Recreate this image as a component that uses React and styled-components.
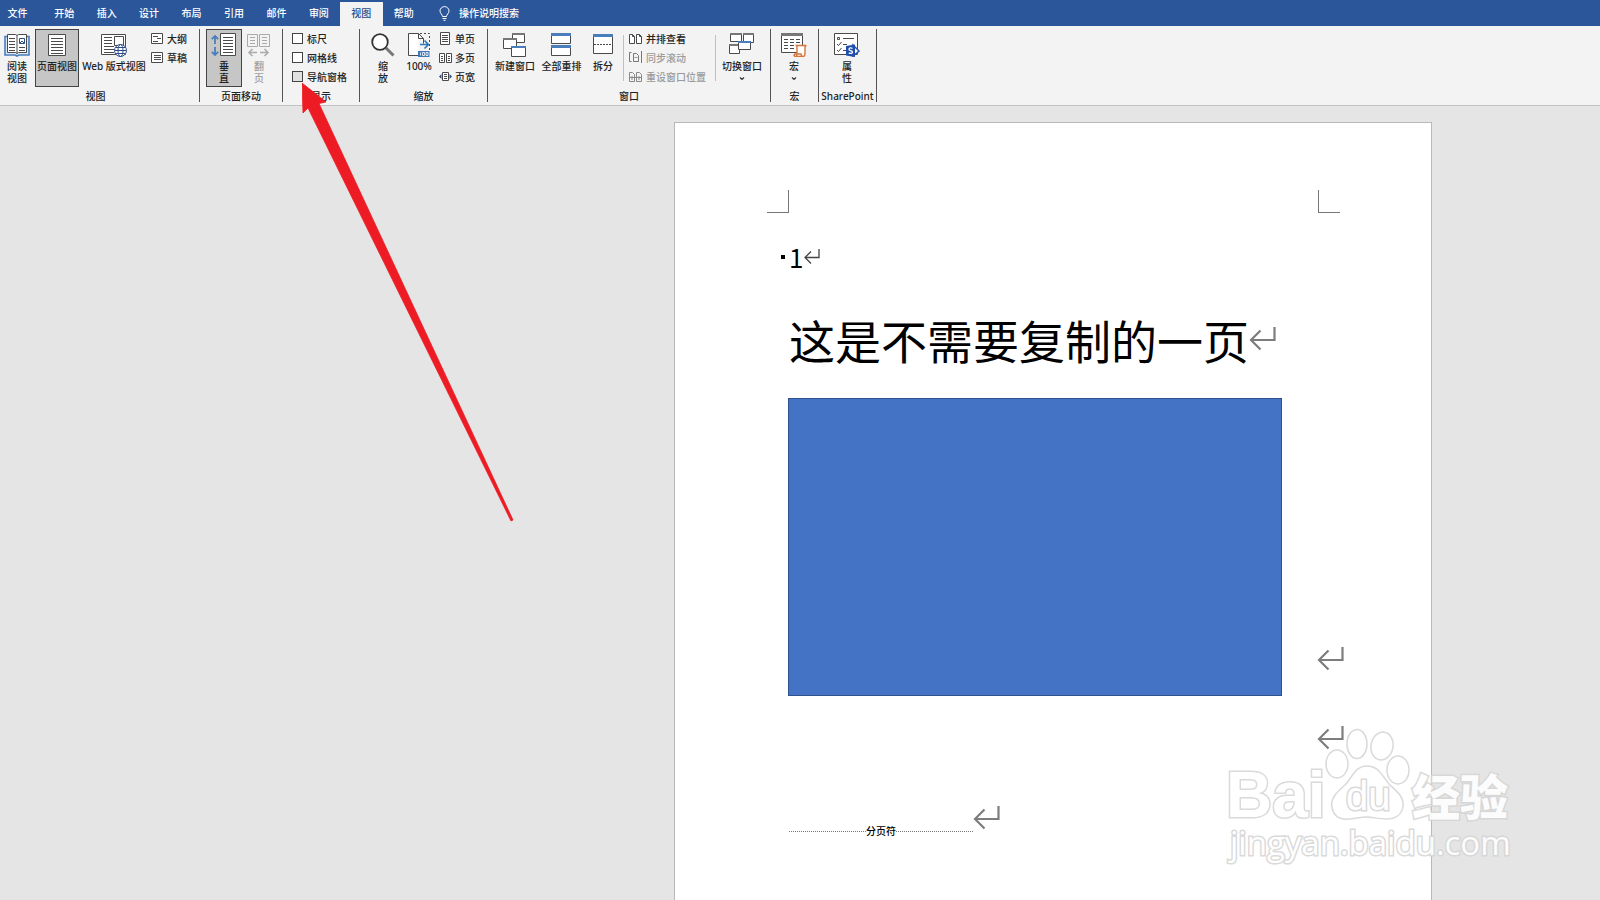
import React, { useState } from 'react';
import styled, { createGlobalStyle, css } from 'styled-components';

const GlobalStyle = createGlobalStyle`
  * {
    box-sizing: border-box;
  }
  body {
    margin: 0;
    overflow: hidden;
    font-family: 'Noto Sans', 'Noto Sans CJK SC', sans-serif;
    font-size: 10px;
    font-weight: 500;
    color: #222;
  }
  button,
  input {
    font: inherit;
    color: inherit;
  }
`;

const AppWindow = styled.div`
  height: 100vh;
  display: flex;
  flex-direction: column;
  background: #e5e5e5;
`;

/* tab strip */
const TabBar = styled.header`
  height: 26px;
  display: flex;
  align-items: stretch;
  background: #2b579a;
  color: #fff;
`;

const Tab = styled.button`
  border: none;
  margin-top: 2px;
  padding: 0 0 2px;
  line-height: 12px;
  text-align: center;
  white-space: nowrap;
  background: ${(props) => (props.$active ? '#f3f3f3' : 'transparent')};
  color: ${(props) => (props.$active ? '#2b4a86' : '#fff')};
`;

const FileTab = styled(Tab)`
  width: 35px;
  margin-right: 8px;
`;

const TabList = styled.nav`
  width: 382px;
  display: grid;
  grid-template-columns: repeat(9, 1fr);
`;

const SearchBox = styled.label`
  flex: 1;
  display: flex;
  align-items: center;
  gap: 9px;
  padding-left: 14px;
  input {
    width: 160px;
    padding: 0;
    border: none;
    outline: none;
    background: transparent;
  }
  input::placeholder {
    color: #fff;
    opacity: 1;
  }
`;

/* ribbon */
const Ribbon = styled.div`
  height: 80px;
  flex-shrink: 0;
  display: flex;
  background: #f3f3f3;
  border-bottom: 1px solid #c3c3c3;
`;

const GroupBox = styled.section`
  width: ${(props) => props.$width}px;
  flex-shrink: 0;
  display: flex;
  flex-direction: column;
  margin: 3px 0;
  border-right: 1px solid #555;
`;

const GroupBody = styled.div`
  flex: 1;
  display: flex;
  align-items: flex-start;
  gap: 1px;
  padding-left: ${(props) => props.$indent || 0}px;
`;

const GroupTitle = styled.h2`
  margin: 0;
  padding-right: ${(props) => props.$trim || 0}px;
  font-size: 10px;
  font-weight: 500;
  line-height: 12px;
  text-align: center;
`;

const BigButton = styled.button`
  width: ${(props) => props.$width}px;
  height: 58px;
  flex-shrink: 0;
  display: flex;
  flex-direction: column;
  align-items: center;
  padding: 3px 0 0;
  border: 1px solid transparent;
  background: transparent;
  line-height: 12px;
  text-align: center;
  white-space: pre;
  ${(props) =>
    props.$pressed &&
    css`
      border-color: #444;
      background: #c6c6c6;
    `}
  &:disabled {
    color: #a0a0a0;
  }
  > svg:first-child {
    flex-shrink: 0;
    margin-bottom: 3px;
  }
`;

const SmallColumn = styled.div`
  display: flex;
  flex-direction: column;
  padding-left: ${(props) => props.$indent || 0}px;
  padding-right: ${(props) => props.$trail || 0}px;
`;

const SmallButton = styled.button`
  height: 19px;
  display: flex;
  align-items: center;
  gap: 3px;
  padding: 0;
  border: none;
  background: transparent;
  white-space: nowrap;
  line-height: 12px;
  &:disabled {
    color: #9a9a9a;
  }
`;

const CheckRow = styled.label`
  height: 19px;
  display: flex;
  align-items: center;
  gap: 4px;
  line-height: 12px;
  input {
    appearance: none;
    width: 11px;
    height: 11px;
    margin: 0;
    border: 1px solid #444;
    background: ${(props) => (props.$hot ? '#e1e1e1' : '#fff')};
  }
  input:checked {
    background: #2b579a;
  }
`;

const Divider = styled.span`
  width: 1px;
  height: 46px;
  margin: 6px 2px 0;
  background: #c0c0c0;
`;

/* document area */
const Workspace = styled.main`
  flex: 1;
  min-height: 0;
  display: flex;
  justify-content: flex-end;
  padding: 16px 168px 0 16px;
  overflow: hidden;
`;

const Page = styled.article`
  width: 758px;
  height: 1070px;
  padding-top: 67px;
  border: 1px solid #b8b8b8;
  background: #fff;
  color: #000;
`;

const CropMarks = styled.div`
  display: flex;
  justify-content: space-between;
  padding: 0 91px 0 92px;
`;

const CropMark = styled.span`
  width: 22px;
  height: 23px;
  border-bottom: 1px solid #777;
  ${(props) => (props.$side === 'left' ? 'border-right' : 'border-left')}: 1px solid #777;
`;

const PageBody = styled.div`
  padding: 26px 87px 0 106px;
`;

const NumberLine = styled.p`
  display: flex;
  align-items: center;
  margin: 0;
  font-family: 'Noto Sans CJK SC', sans-serif;
  font-size: 26px;
  font-weight: 400;
  line-height: 36px;
  &::before {
    content: '';
    width: 4px;
    height: 4px;
    margin-right: 4px;
    background: #000;
  }
`;

const Heading = styled.h1`
  display: flex;
  align-items: center;
  margin: 36px 0 0 8px;
  font-family: 'Noto Sans CJK SC', sans-serif;
  font-size: 46px;
  font-weight: 400;
  line-height: 56px;
  white-space: nowrap;
`;

const ShapeRow = styled.div`
  display: flex;
  justify-content: space-between;
  align-items: flex-end;
  margin: 31px 0 0 7px;
`;

const BlueShape = styled.div`
  width: 494px;
  height: 298px;
  border: 1px solid #2f528f;
  background: #4472c4;
`;

const ShapeMark = styled.div`
  line-height: 0;
  padding-bottom: 25px;
`;

const EmptyLine = styled.div`
  display: flex;
  justify-content: flex-end;
  padding-top: 30px;
`;

const BreakLine = styled.div`
  display: flex;
  align-items: flex-start;
  margin: 56px 0 0 8px;
`;

const BreakRule = styled.div`
  width: 184px;
  display: flex;
  align-items: center;
  padding-top: 19px;
  font-family: 'Noto Sans CJK SC', sans-serif;
  line-height: 12px;
  &::before,
  &::after {
    content: '';
    flex: 1;
    border-top: 1px dotted #777;
  }
`;

const PointerArrow = styled.svg`
  position: absolute;
  left: 302px;
  top: 83px;
  pointer-events: none;
`;

const Watermark = styled.svg`
  position: absolute;
  right: 80px;
  bottom: 24px;
  pointer-events: none;
  opacity: 0.9;
  text {
    paint-order: stroke;
  }
`;

const dark = '#4a4a4a';
const blue = '#2e75b6';

function Svg({ w, h = 24, children }) {
  return (
    <svg width={w} height={h} viewBox={`0 0 ${w} ${h}`} fill="none" stroke={dark} aria-hidden="true">
      {children}
    </svg>
  );
}

// horizontal text strokes used in most of the page icons
const rows = (x, y, w, count, step) =>
  Array.from({ length: count }, (_, i) => `M${x} ${y + i * step}h${w}`).join('');

const ReadIcon = () => (
  <Svg w={26}>
    <path d="M3 3.500H1V22H11l2 1 2-1h10V3.500H23" stroke="#4a7ebb" strokeWidth="1.600" fill="#dce8f5" />
    <path d="M3.500 1.500h8l1.500 1 1.500-1h8v18h-8l-1.500 1-1.500-1h-8z" fill="#fff" />
    <path d="M13 2.500v18" />
    <path d={rows(5, 5.5, 6, 5, 3) + rows(15, 14.5, 6, 2, 3)} />
    <path d="M15.500 5.500h5v5h-5zM16 10l2-2 2 2" stroke="#2b4a86" />
  </Svg>
);

const PageIcon = () => (
  <Svg w={18}>
    <path d="M.5 1.500h17v21H.5z" fill="#fff" />
    <path d={rows(3, 5.5, 12, 6, 3)} />
  </Svg>
);

const WebIcon = () => (
  <Svg w={26}>
    <path d="M.5 1.500h24v20H.5z" fill="#fff" />
    <path d={rows(3, 4.5, 8, 3, 3) + rows(3, 13.5, 10, 3, 3)} />
    <path d="M13.500 3.500h9v9h-9z" fill="#fff" />
    <g stroke="#2b4a86">
      <circle cx="19.500" cy="17.500" r="6" fill="#fff" />
      <ellipse cx="19.500" cy="17.500" rx="2.500" ry="6" />
      <path d="M14 17.500h11M15 14.500h9M15 20.500h9" />
    </g>
  </Svg>
);

const OutlineIcon = () => (
  <Svg w={13} h={12}>
    <path d="M.5.5h11v10H.5z" fill="#fff" />
    <path d="M2 3.500h5M6 5.500h4M2 8.500h5" />
  </Svg>
);

const DraftIcon = () => (
  <Svg w={13} h={12}>
    <path d="M.5.5h11v10H.5z" fill="#fff" />
    <path d="M3 3.500h7M3 5.500h7M3 7.500h7" />
  </Svg>
);

const VerticalIcon = () => (
  <Svg w={26}>
    <path d="M4 3v8M.8 6.200L4 3l3.200 3.200M4 14v8M.8 18.800L4 22l3.200-3.200" stroke="#4a7ebb" strokeWidth="1.800" />
    <path d="M9.500.5h15v22h-15z" fill="#fff" />
    <path d={rows(12, 4.5, 10, 6, 3)} />
  </Svg>
);

const FlipIcon = () => (
  <Svg w={24}>
    <g stroke="#aaa">
      <path d="M.5 1.500h10v12H.5zM12.500 1.500h10v12h-10z" />
      <path d={rows(3, 4.5, 5, 3, 3) + rows(15, 4.5, 5, 3, 3)} />
      <path d="M2 19.500h8M5.500 16L2 19.500 5.500 23M13 19.500h8M17.500 16l3.500 3.500-3.500 3.500" strokeWidth="1.500" />
    </g>
  </Svg>
);

const ZoomIcon = () => (
  <Svg w={24}>
    <path d="M15 15l7.500 7.500" stroke="#777" strokeWidth="3" />
    <circle cx="9" cy="9" r="7.800" fill="#fff" stroke="#333" strokeWidth="1.800" />
  </Svg>
);

const HundredIcon = () => (
  <Svg w={24}>
    <path d="M11.500.500H1.500v22h10M11.500.500l5 5v5M11.500.500v5h5" fill="#fff" />
    <path d="M13 .500h9.500v17" strokeDasharray="2 2" />
    <path d="M13 11.500h8M17.500 7.500l4 4-4 4" stroke={blue} strokeWidth="1.600" />
    <path d="M11 18h11.500v6H11z" fill="#3f78b8" stroke="none" />
    <path d="M13.500 19.500v3M15.500 19.500h2v3h-2zM19 19.500h2v3h-2z" stroke="#fff" strokeWidth=".8" />
  </Svg>
);

const OnePageIcon = () => (
  <Svg w={13} h={13}>
    <path d="M1.500.5h9v12h-9z" fill="#fff" />
    <path d={rows(3, 3.5, 6, 4, 2)} />
  </Svg>
);

const MultiPageIcon = () => (
  <Svg w={13} h={12}>
    <path d="M.5 1.500h5v9h-5zM7.500 1.500h5v9h-5z" fill="#fff" />
    <path d={rows(2, 4.5, 2, 3, 2) + rows(9, 4.5, 2, 3, 2)} />
  </Svg>
);

const PageWidthIcon = () => (
  <Svg w={13} h={12}>
    <path d="M3.500 1.500h6v8h-6z" fill="#fff" />
    <path d={rows(5, 3.5, 3, 3, 2)} />
    <path d="M0 5.500l2.500-2.500v5zM13 5.500L10.500 3v5z" fill="#2b4a86" stroke="none" />
  </Svg>
);

// one little window with a coloured title strip
const Win = ({ x, y, w, h, bar = '#777' }) => (
  <g>
    <path d={`M${x} ${y}h${w}v${h}h-${w}z`} fill="#fff" />
    <path d={`M${x - 0.5} ${y + 0.5}h${w + 1}`} stroke={bar} strokeWidth="2" />
  </g>
);

const NewWindowIcon = () => (
  <Svg w={24}>
    <Win x={9.5} y={0.5} w={12} h={9} />
    <Win x={0.5} y={5.5} w={13} h={10} />
    <Win x={8.5} y={13.5} w={14} h={10} bar="#4a7ebb" />
  </Svg>
);

const ArrangeIcon = () => (
  <Svg w={21}>
    <Win x={0.5} y={0.5} w={19} h={10} bar="#4a7ebb" />
    <Win x={0.5} y={12.5} w={19} h={10} bar="#4a7ebb" />
    <path d="M0 1.500h20M0 13.500h20" stroke="#4a7ebb" strokeWidth="3" />
  </Svg>
);

const SplitIcon = () => (
  <Svg w={21}>
    <Win x={0.5} y={1.5} w={19} h={19} bar="#4a7ebb" />
    <path d="M0 2.500h20" stroke="#4a7ebb" strokeWidth="3" />
    <path d="M1 11.500h19" strokeDasharray="2 1" />
  </Svg>
);

const SideBySideIcon = () => (
  <Svg w={14} h={12}>
    <path d="M.5 1.500h3l2 2v7h-5zM7.500 1.500h3l2 2v7h-5zM3.500 1.500v2h2M10.500 1.500v2h2" fill="#fff" />
  </Svg>
);

const SyncIcon = () => (
  <Svg w={14} h={13}>
    <path d="M2.500 1.500h-2v9h2M4.500 2.500h3l2 2v6h-5zM12.500 0v12" stroke="#777" />
    <path d="M5.500 6.500h3" stroke="#999" />
  </Svg>
);

const ResetIcon = () => (
  <Svg w={14} h={12}>
    <path d="M.5 1.500h3l2 2v7h-5zM7.500 1.500h3l2 2v7h-5zM0 6.500h13M3 5v4M10 5v4" stroke="#888" />
  </Svg>
);

const SwitchIcon = () => (
  <Svg w={26}>
    <Win x={1.5} y={0.5} w={11} h={8} />
    <Win x={14.5} y={0.5} w={10} h={9} />
    <Win x={0.5} y={11.5} w={10} h={9} />
    <Win x={9.5} y={8.5} w={12} h={8} bar="#4a7ebb" />
  </Svg>
);

const MacroIcon = () => (
  <Svg w={27}>
    <Win x={0.5} y={1.5} w={21} h={18} />
    <path d="M0 1.500h22" stroke="#777" strokeWidth="3" />
    <path d={rows(3, 6.5, 4, 4, 3) + rows(9, 6.5, 4, 4, 3) + rows(15, 6.5, 4, 2, 3)} />
    <path
      d="M15.500 12.500h10c-1 0-1.500 1-1.500 2v6c0 2-1 3-2 3h-8c1.500 0 2-1 2-2v-7c0-1 0-1.500-.5-2zM14 23.300c-1.500 0-1-2.300 0-2.300h6c0 1.500.5 2.500 2 2.500"
      fill="#fff"
      stroke="#d9743a"
      strokeWidth="1.400"
    />
  </Svg>
);

const PropertyIcon = () => (
  <Svg w={26}>
    <path d="M.5.500h23v21H.5z" fill="#fff" />
    <path d="M3.500 4.500h2v2h-2zM3 11l1.500 1.500L7.500 9M3 17l1.500 1.500L7.500 15M9 5.500h11M9 11.500h4M9 17.500h3" />
    <path d="M19 12l6 6-6 5z" fill="#fff" stroke="#2b57b0" strokeWidth="1.500" />
    <path d="M12 13l9-1.500V24l-9-1.500z" fill="#1f4fae" stroke="none" />
    <path d="M18.500 15.500c-1.500-1-3.500-.8-3.500.8 0 1.800 3.500 1 3.500 2.900 0 1.500-2.500 1.500-3.700.5" stroke="#fff" strokeWidth="1.300" />
  </Svg>
);

const Chevron = () => (
  <svg width="6" height="12" viewBox="0 0 6 12" fill="none" stroke="#333" strokeWidth="1.200" aria-hidden="true">
    <path d="M1 5.500l2 2 2-2" />
  </svg>
);

const BulbIcon = () => (
  <svg width="11" height="15" viewBox="0 0 11 15" fill="none" stroke="#fff" aria-hidden="true">
    <path d="M3.500 10.500C3.500 8.500 1 7.500 1 4.900a4.500 4.300 0 0 1 9 0c0 2.600-2.500 3.600-2.500 5.600zM3.500 12.500h4M4.500 14.300h2" />
  </svg>
);

// paragraph mark
const ReturnMark = ({ small }) =>
  small ? (
    <svg width="17" height="16" viewBox="0 0 17 16" fill="none" stroke="#444" aria-hidden="true">
      <path d="M16 0v8.500H2M8 2.500l-6 6 6 6" strokeWidth="1.300" />
    </svg>
  ) : (
    <svg width="27" height="24" viewBox="0 0 27 24" fill="none" stroke="#7d7d7d" strokeWidth="2.200" aria-hidden="true">
      <path d="M25.500 0v13H2M11.500 3.500L2 13l9.500 9.500" />
    </svg>
  );

const tabs = ['开始', '插入', '设计', '布局', '引用', '邮件', '审阅', '视图', '帮助'];

function Group({ title, width, indent, trim, children }) {
  return (
    <GroupBox $width={width}>
      <GroupBody $indent={indent}>{children}</GroupBody>
      <GroupTitle $trim={trim}>{title}</GroupTitle>
    </GroupBox>
  );
}

function App() {
  const [activeTab, setActiveTab] = useState('视图');
  const [search, setSearch] = useState('');

  return (
    <AppWindow>
      <GlobalStyle />
      <TabBar>
        <FileTab type="button">文件</FileTab>
        <TabList>
          {tabs.map((tab) => (
            <Tab key={tab} type="button" $active={tab === activeTab} onClick={() => setActiveTab(tab)}>
              {tab}
            </Tab>
          ))}
        </TabList>
        <SearchBox>
          <BulbIcon />
          <input
            type="text"
            aria-label="操作说明搜索"
            placeholder="操作说明搜索"
            value={search}
            onChange={(e) => setSearch(e.target.value)}
          />
        </SearchBox>
      </TabBar>

      <Ribbon>
        <Group title="视图" width={200} trim={8}>
          <BigButton type="button" $width={34}>
            <ReadIcon />
            {'阅读\n视图'}
          </BigButton>
          <BigButton type="button" $width={44} $pressed>
            <PageIcon />
            页面视图
          </BigButton>
          <BigButton type="button" $width={68}>
            <WebIcon />
            Web 版式视图
          </BigButton>
          <SmallColumn $indent={2}>
            <SmallButton type="button">
              <OutlineIcon />
              大纲
            </SmallButton>
            <SmallButton type="button">
              <DraftIcon />
              草稿
            </SmallButton>
          </SmallColumn>
        </Group>

        <Group title="页面移动" width={83} indent={6}>
          <BigButton type="button" $width={36} $pressed>
            <VerticalIcon />
            {'垂\n直'}
          </BigButton>
          <BigButton type="button" $width={32} disabled>
            <FlipIcon />
            {'翻\n页'}
          </BigButton>
        </Group>

        <Group title="显示" width={77} indent={9}>
          <SmallColumn>
            <CheckRow>
              <input type="checkbox" />
              标尺
            </CheckRow>
            <CheckRow>
              <input type="checkbox" />
              网格线
            </CheckRow>
            <CheckRow $hot>
              <input type="checkbox" />
              导航窗格
            </CheckRow>
          </SmallColumn>
        </Group>

        <Group title="缩放" width={128} indent={6}>
          <BigButton type="button" $width={34}>
            <ZoomIcon />
            {'缩\n放'}
          </BigButton>
          <BigButton type="button" $width={36}>
            <HundredIcon />
            100%
          </BigButton>
          <SmallColumn $indent={1}>
            <SmallButton type="button">
              <OnePageIcon />
              单页
            </SmallButton>
            <SmallButton type="button">
              <MultiPageIcon />
              多页
            </SmallButton>
            <SmallButton type="button">
              <PageWidthIcon />
              页宽
            </SmallButton>
          </SmallColumn>
        </Group>

        <Group title="窗口" width={283} indent={5}>
          <BigButton type="button" $width={44}>
            <NewWindowIcon />
            新建窗口
          </BigButton>
          <BigButton type="button" $width={47}>
            <ArrangeIcon />
            全部重排
          </BigButton>
          <BigButton type="button" $width={34}>
            <SplitIcon />
            拆分
          </BigButton>
          <Divider />
          <SmallColumn $indent={2} $trail={6}>
            <SmallButton type="button">
              <SideBySideIcon />
              并排查看
            </SmallButton>
            <SmallButton type="button" disabled>
              <SyncIcon />
              同步滚动
            </SmallButton>
            <SmallButton type="button" disabled>
              <ResetIcon />
              重设窗口位置
            </SmallButton>
          </SmallColumn>
          <Divider />
          <BigButton type="button" $width={46}>
            <SwitchIcon />
            切换窗口
            <Chevron />
          </BigButton>
        </Group>

        <Group title="宏" width={48} indent={3}>
          <BigButton type="button" $width={40}>
            <MacroIcon />
            宏
            <Chevron />
          </BigButton>
        </Group>

        <Group title="SharePoint" width={58} indent={3}>
          <BigButton type="button" $width={50}>
            <PropertyIcon />
            {'属\n性'}
          </BigButton>
        </Group>
      </Ribbon>

      <Workspace>
        <Page>
          <CropMarks>
            <CropMark $side="left" />
            <CropMark $side="right" />
          </CropMarks>
          <PageBody>
            <NumberLine>
              1<ReturnMark small />
            </NumberLine>
            <Heading>
              这是不需要复制的一页
              <ReturnMark />
            </Heading>
            <ShapeRow>
              <BlueShape />
              <ShapeMark>
                <ReturnMark />
              </ShapeMark>
            </ShapeRow>
            <EmptyLine>
              <ReturnMark />
            </EmptyLine>
            <BreakLine>
              <BreakRule>分页符</BreakRule>
              <ReturnMark />
            </BreakLine>
          </PageBody>
        </Page>
      </Workspace>

      <PointerArrow width="212" height="440" viewBox="0 0 212 440" aria-hidden="true">
        <path d="M0 0l24 19-7 1.500L211 437l-2 1L6 25 1 30z" fill="#ed1c24" stroke="#ed1c24" strokeWidth=".8" />
      </PointerArrow>

      <Watermark width="296" height="152" viewBox="0 0 296 152" fill="#fff" stroke="#d6d6d6" strokeWidth="1.500">
        <g>
          <ellipse cx="113" cy="40" rx="11" ry="14" />
          <ellipse cx="133" cy="20" rx="10" ry="14.500" />
          <ellipse cx="158" cy="22" rx="11" ry="14" transform="rotate(10 158 22)" />
          <ellipse cx="174" cy="46" rx="11" ry="14" />
          <path d="M143 42c-12 0-15 12-22 19-8 7-15 13-13 23 2 9 9 12 17 11 8-1 13-2 18-2s12 2 19 2c9 0 16-4 17-13 1-10-7-15-14-22-6-7-10-18-22-18z" />
        </g>
        <text x="2" y="93" fontFamily="Liberation Sans" fontWeight="700" fontSize="64" strokeWidth="3">
          Bai
        </text>
        <text x="122" y="86" fontFamily="Liberation Sans" fontSize="40" strokeWidth="3">
          du
        </text>
        <text x="188" y="91" fontFamily="Noto Sans CJK SC" fontWeight="900" fontSize="48" strokeWidth="3">
          经验
        </text>
        <text x="6" y="131" fontFamily="Open Sans, Noto Sans" fontWeight="500" fontSize="33" strokeWidth="3">
          jingyan.baidu.com
        </text>
      </Watermark>
    </AppWindow>
  );
}

export default App;
